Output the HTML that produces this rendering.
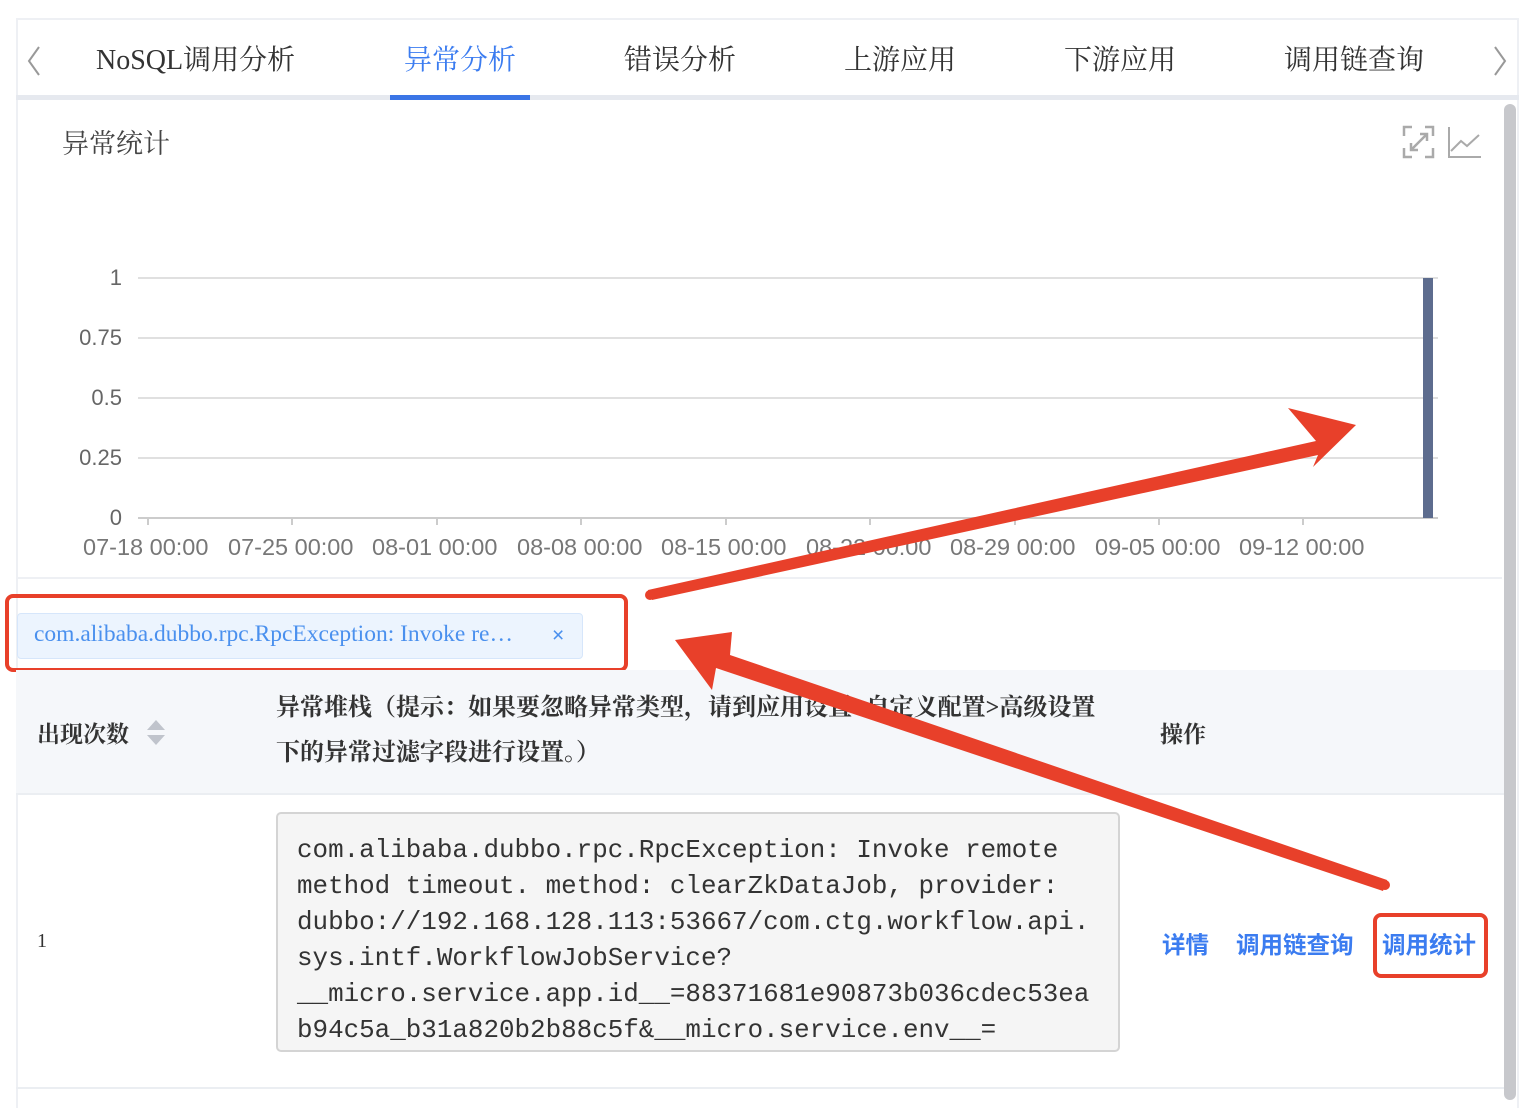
<!DOCTYPE html>
<html><head><meta charset="utf-8"><style>
*{margin:0;padding:0;box-sizing:border-box}
body{width:1534px;height:1108px;background:#fff;position:relative;overflow:hidden;font-family:"Liberation Serif","Noto Serif CJK SC",serif;color:#333}
.a{position:absolute}
.tab{position:absolute;top:38px;font-size:28px;color:#333;white-space:nowrap}
.sans{font-family:"Liberation Sans","Noto Sans CJK SC",sans-serif}
.yl{position:absolute;width:60px;text-align:right;left:62px;font-size:22px;color:#666;font-family:"Liberation Sans",sans-serif}
.xl{position:absolute;top:534px;font-size:23.5px;color:#777;font-family:"Liberation Sans",sans-serif;white-space:nowrap}
.grid{position:absolute;left:138px;width:1300px;height:2px;background:#e0e0e0}
.tick{position:absolute;top:518px;width:2px;height:7px;background:#ccc}
</style></head><body>
<div class="a" style="left:16px;top:18px;width:1503px;height:1090px;border:2px solid #eef0f4;border-bottom:none"></div>
<div class="a" style="left:16px;top:95px;width:1503px;height:5px;background:#e6e9ef"></div>
<div class="a" style="left:390px;top:95px;width:140px;height:5px;background:#3b75e6"></div>
<svg class="a" style="left:24px;top:44px" width="20" height="34"><path d="M15 3 L5 17 L15 31" stroke="#999" stroke-width="2" fill="none"/></svg>
<svg class="a" style="left:1490px;top:44px" width="20" height="34"><path d="M5 3 L15 17 L5 31" stroke="#999" stroke-width="2" fill="none"/></svg>
<div class="tab" style="left:96px">NoSQL调用分析</div>
<div class="tab" style="left:404px;color:#3b7cf0">异常分析</div>
<div class="tab" style="left:624px">错误分析</div>
<div class="tab" style="left:844px">上游应用</div>
<div class="tab" style="left:1064px">下游应用</div>
<div class="tab" style="left:1284px">调用链查询</div>
<div class="a" style="left:1504px;top:104px;width:12px;height:996px;border-radius:6px;background:#c7c8cc"></div>
<div class="a" style="left:18px;top:577px;width:1484px;height:2px;background:#eef0f4"></div>
<div class="a" style="left:62px;top:122px;font-size:27px;color:#444">异常统计</div>
<svg class="a" style="left:1400px;top:124px" width="85" height="36" fill="none" stroke="#aaa" stroke-width="2.5">
<path d="M4 12 V3 H12 M25 3 H33 V12 M4 24 V33 H12 M25 33 H33 V24"/>
<path d="M11 26 L27 10 M20 10 H27 V17 M11 19 V26 H18"/>
<path d="M49 3 V33 H81 M51 27 L61 17 L67 22 L79 11" stroke-width="2"/>
</svg>
<div class="grid" style="top:277px"></div>
<div class="grid" style="top:337px"></div>
<div class="grid" style="top:397px"></div>
<div class="grid" style="top:457px"></div>
<div class="grid" style="top:517px;background:#ccc"></div>
<div class="yl" style="top:265px">1</div>
<div class="yl" style="top:325px">0.75</div>
<div class="yl" style="top:385px">0.5</div>
<div class="yl" style="top:445px">0.25</div>
<div class="yl" style="top:505px">0</div>
<div class="tick" style="left:147px"></div><div class="tick" style="left:291px"></div><div class="tick" style="left:436px"></div><div class="tick" style="left:580px"></div><div class="tick" style="left:725px"></div><div class="tick" style="left:869px"></div><div class="tick" style="left:1014px"></div><div class="tick" style="left:1158px"></div><div class="tick" style="left:1302px"></div>
<div class="xl" style="left:83px">07-18 00:00</div>
<div class="xl" style="left:228px">07-25 00:00</div>
<div class="xl" style="left:372px">08-01 00:00</div>
<div class="xl" style="left:517px">08-08 00:00</div>
<div class="xl" style="left:661px">08-15 00:00</div>
<div class="xl" style="left:806px">08-22 00:00</div>
<div class="xl" style="left:950px">08-29 00:00</div>
<div class="xl" style="left:1095px">09-05 00:00</div>
<div class="xl" style="left:1239px">09-12 00:00</div>
<div class="a" style="left:1423px;top:278px;width:10px;height:240px;background:#5d6c8e"></div>
<div class="a" style="left:17px;top:613px;width:566px;height:46px;background:#ecf4fe;border:1.5px solid #d6e6fb;border-radius:4px"></div>
<div class="a" style="left:34px;top:621px;font-size:23.5px;color:#4a90ee;white-space:nowrap">com.alibaba.dubbo.rpc.RpcException: Invoke re…</div>
<div class="a sans" style="left:552px;top:624px;font-size:21px;color:#4a90ee">×</div>
<div class="a" style="left:5px;top:594px;width:623px;height:78px;border:4px solid #e8402a;border-radius:8px"></div>
<div class="a" style="left:16px;top:670px;width:1488px;height:125px;background:#f5f7fa;border-bottom:2px solid #ebeef2"></div>
<div class="a" style="left:37px;top:716px;font-size:23px;font-weight:bold;color:#333">出现次数</div>
<svg class="a" style="left:145px;top:718px" width="22" height="30"><path d="M2 12 L11 2 L20 12Z M2 17 L11 27 L20 17Z" fill="#c0c4cc"/></svg>
<div class="a" style="left:276px;top:686px;font-size:24px;font-weight:bold;line-height:45px;width:860px;white-space:nowrap">异常堆栈（提示：如果要忽略异常类型，请到应用设置>自定义配置>高级设置<br>下的异常过滤字段进行设置。）</div>
<div class="a" style="left:1160px;top:716px;font-size:23px;font-weight:bold">操作</div>
<div class="a" style="left:37px;top:930px;font-size:20px">1</div>
<div class="a" style="left:276px;top:812px;width:844px;height:240px;background:#f5f5f5;border:2px solid #d4d4d4;border-radius:5px"></div>
<div class="a" style="left:297px;top:832px;font-family:'Liberation Mono',monospace;font-size:25.9px;line-height:36px;color:#333;white-space:pre">com.alibaba.dubbo.rpc.RpcException: Invoke remote
method timeout. method: clearZkDataJob, provider:
dubbo://192.168.128.113:53667/com.ctg.workflow.api.
sys.intf.WorkflowJobService?
__micro.service.app.id__=88371681e90873b036cdec53ea
b94c5a_b31a820b2b88c5f&amp;__micro.service.env__=</div>
<div class="a sans" style="left:1162px;top:926px;font-size:23.5px;font-weight:bold;color:#3b7cf0;white-space:nowrap">详情</div>
<div class="a sans" style="left:1236px;top:926px;font-size:23.5px;font-weight:bold;color:#3b7cf0;white-space:nowrap">调用链查询</div>
<div class="a sans" style="left:1382px;top:926px;font-size:23.5px;font-weight:bold;color:#3b7cf0;white-space:nowrap">调用统计</div>
<div class="a" style="left:1373px;top:913px;width:115px;height:65px;border:4px solid #e8402a;border-radius:8px"></div>
<div class="a" style="left:16px;top:1087px;width:1488px;height:2px;background:#ebeef2"></div>
<svg class="a" style="left:0;top:0" width="1534" height="1108">
<polygon fill="#e8402a" points="648,590 1316,441 1288,408 1356,425 1313,467 1318,455 652,600"/>
<polygon fill="#e8402a" points="1387,880 730,655 732,632 675,640 712,690 716,668 1383,891"/>
<circle cx="650" cy="595" r="5" fill="#e8402a"/>
<circle cx="1385" cy="885" r="5" fill="#e8402a"/>
</svg>
</body></html>
